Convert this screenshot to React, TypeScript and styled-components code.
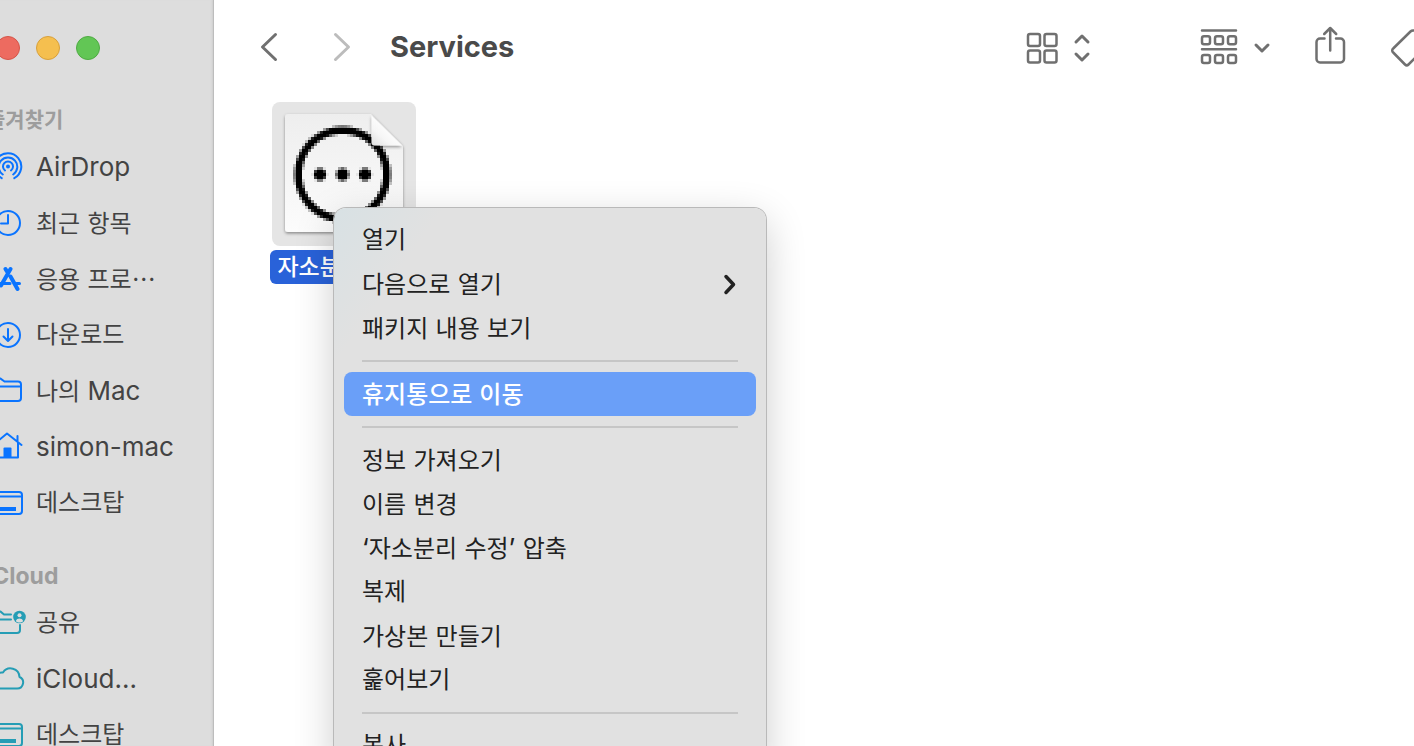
import React from 'react';
import styled, { createGlobalStyle } from 'styled-components';

const GlobalStyle = createGlobalStyle`
  * { box-sizing: border-box; }
  body { margin: 0; font-family: Inter, "Noto Sans CJK KR", sans-serif; background: #fff; }
  button { font: inherit; color: inherit; background: none; border: 0; padding: 0; text-align: left; }
  svg { display: block; flex: none; }
`;

const Window = styled.div`
  position: relative;
  display: flex;
  height: 100vh;
  overflow: hidden;
`;

const Sidebar = styled.aside`
  flex: none;
  width: 214px;
  height: 100%;
  overflow: hidden;
  background: #dddddd;
  border-right: 1px solid #bdbdbd;
  box-shadow: inset -2px 0 2px -1px #cfcfcf;
`;

const SidebarContent = styled.div`
  margin-left: -14px;
`;

const TrafficLights = styled.div`
  display: flex;
  gap: 16px;
  padding: 36px 10px 0;
  height: 99px;
`;

const Light = styled.button<{ $fill: string; $edge: string }>`
  width: 24px;
  height: 24px;
  border-radius: 50%;
  background: ${(p) => p.$fill};
  border: 1px solid ${(p) => p.$edge};
`;

const Section = styled.section`
  margin-bottom: 24px;
`;

const SectionTitle = styled.h2`
  margin: 0;
  height: 40px;
  padding-top: 2px;
  line-height: 38px;
  font-size: 21px;
  font-weight: 700;
  color: #9d9d9d;
`;

const SidebarItem = styled.a`
  display: flex;
  align-items: center;
  gap: 6px;
  height: 56px;
  font-size: 24px;
  line-height: 54px;
  color: #434343;
  text-decoration: none;
  white-space: nowrap;
`;

/* Latin runs are set slightly larger so that they balance the Hangul beside them. */
const Latin = styled.span<{ $size: number }>`
  font-size: ${(p) => p.$size}px;
`;

const Mixed = ({ text, latin = 26 }: { text: string; latin?: number }) => (
  <span>
    {text.split(/([ -~‘’]+)/).map((run, i) =>
      i % 2 ? <Latin key={i} $size={latin}>{run}</Latin> : run
    )}
  </span>
);

const Main = styled.main`
  flex: 1;
  min-width: 0;
  overflow: hidden;
`;

const Toolbar = styled.header`
  display: flex;
  align-items: center;
  height: 96px;
  padding-left: 42px;
  color: #707070;
`;

const Title = styled.h1`
  margin: 0 auto 0 36px;
  font-size: 29px;
  line-height: 36px;
  padding-bottom: 2px;
  font-weight: 700;
  color: #4a4a4a;
`;

const ToolButton = styled.button<{ $before?: number; $dim?: boolean }>`
  display: flex;
  align-items: center;
  gap: 14px;
  flex: none;
  margin-left: ${(p) => p.$before ?? 0}px;
  color: ${(p) => (p.$dim ? '#bcbcbc' : 'inherit')};
`;

const Files = styled.div`
  display: flex;
  padding: 6px 56px;
`;

const FileItem = styled.div`
  display: flex;
  flex-direction: column;
  align-items: center;
  gap: 4px;
  width: 148px;
`;

const Thumb = styled.div`
  width: 144px;
  height: 144px;
  border-radius: 8px;
  background: #e5e5e5;
`;

const FileName = styled.span`
  height: 34px;
  padding: 0 7px;
  border-radius: 6px;
  background: #2962d9;
  color: #fff;
  font-size: 23px;
  font-weight: 500;
  line-height: 34px;
  white-space: nowrap;
`;

const Menu = styled.div`
  position: absolute;
  left: 334px;
  top: 208px;
  width: 432px;
  padding: 10px;
  border-radius: 12px;
  background: linear-gradient(125deg, #d8e1e4 0, #e1e1e1 90px);
  box-shadow: 0 0 0 1px #b9b9b9, 0 12px 40px rgba(0, 0, 0, 0.2);
`;

const MenuItem = styled.button<{ $active?: boolean }>`
  display: flex;
  align-items: center;
  justify-content: space-between;
  width: 100%;
  height: 44px;
  padding: 0 18px;
  border-radius: 8px;
  font-size: 24px;
  line-height: 44px;
  font-weight: ${(p) => (p.$active ? 500 : 400)};
  color: ${(p) => (p.$active ? '#fff' : '#222')};
  background: ${(p) => (p.$active ? '#6a9ff8' : 'none')};
`;

const Separator = styled.hr`
  height: 2px;
  margin: 10px 18px;
  border: 0;
  background: #c6c6c6;
`;

const blue = '#0a74ff';
const teal = '#259db5';

const Icon = ({ children, color = blue }: { children: React.ReactNode; color?: string }) => (
  <svg width="44" height="44" viewBox="0 0 44 44" fill="none" stroke={color} strokeWidth="2" strokeLinecap="round" strokeLinejoin="round" aria-hidden="true">
    {children}
  </svg>
);

const AirDrop = () => (
  <Icon>
    <circle cx="22" cy="21.5" r="2" fill={blue} stroke="none" />
    <path d="M19 25.500a5 5 0 1 1 6 0M16.800 29.500a9.300 9.300 0 1 1 10.400 0M15.700 33.200a13.300 13.300 0 1 1 12.600 0" />
  </Icon>
);
const Clock = () => (
  <Icon><circle cx="22" cy="22" r="12" /><path d="M22 14v8.500h-7" /></Icon>
);
const Apps = () => (
  <Icon>
    <path d="M24.500 12L15 28.500M19.500 12L21 14.500M24.500 19.500L31.500 32" strokeWidth="4" />
    <path d="M10 26.500h14M30.500 26.500h3" strokeWidth="3" />
  </Icon>
);
const Download = () => (
  <Icon><circle cx="22" cy="22" r="12" /><path d="M22 16v11.500M17.500 23.500l4.500 4.500 4.500-4.500" /></Icon>
);
const Folder = () => (
  <Icon><path d="M8 12a2.500 2.500 0 0 1 2.500-2.500h4l4 3h13.500a3 3 0 0 1 3 3V29a3 3 0 0 1-3 3H11a3 3 0 0 1-3-3zM8 17.500h27" /></Icon>
);
const House = () => (
  <Icon>
    <path d="M7 20L21 8.500l14.500 11.500M11 18v14.500h21V18M31.500 16v-5" />
    <path d="M17.500 23.500a1 1 0 0 1 1-1h6a1 1 0 0 1 1 1V33h-8z" fill={blue} stroke="none" />
  </Icon>
);
const Desktop = ({ color = blue }: { color?: string }) => (
  <Icon color={color}><rect x="8" y="11" width="28" height="22" rx="3" /><path d="M8 15.500h28" /><path d="M13 28h17" strokeWidth="4" strokeLinecap="butt" /></Icon>
);
const Shared = () => (
  <Icon color={teal}>
    <path d="M25 13.500h-7l-3.500-3h-4A2.500 2.500 0 0 0 8 13v16a3 3 0 0 0 3 3h20a3 3 0 0 0 3-3v-5M8 18.500h17" />
    <circle cx="33.5" cy="16" r="6.3" fill={teal} stroke="none" />
    <circle cx="33.5" cy="14.3" r="2" fill="#ddd" stroke="none" />
    <path d="M29.800 20.300c.6-2.200 2-2.800 3.700-2.800s3.100.6 3.700 2.800c-2 1.700-5.400 1.700-7.400 0z" fill="#ddd" stroke="none" />
  </Icon>
);
const Cloud = () => (
  <Icon color={teal}><path d="M13 31.500h18a6 6 0 0 0 2.500-11.500 9 9 0 0 0-16.500-4.500 6 6 0 0 0-7 5A5.700 5.700 0 0 0 13 31.500z" /></Icon>
);

const favorites: [string, React.ReactNode][] = [
  ['AirDrop', <AirDrop />],
  ['최근 항목', <Clock />],
  ['응용 프로⋯', <Apps />],
  ['다운로드', <Download />],
  ['나의 Mac', <Folder />],
  ['simon-mac', <House />],
  ['데스크탑', <Desktop />],
];
const cloud: [string, React.ReactNode][] = [
  ['공유', <Shared />],
  ['iCloud...', <Cloud />],
  ['데스크탑', <Desktop color={teal} />],
];

const Glyph = ({ w, h, sw = 3, children }: { w: number; h: number; sw?: number; children: React.ReactNode }) => (
  <svg width={w} height={h} viewBox={`0 0 ${w} ${h}`} fill="none" stroke="currentColor" strokeWidth={sw} strokeLinecap="round" strokeLinejoin="round" aria-hidden="true">
    {children}
  </svg>
);

/* The low-resolution ring and dots of the workflow icon, as square cells. */
const CELL = 3;
const ringCells = (() => {
  const cells: { x: number; y: number; o: number }[] = [];
  const cover = (d: number, r: number) => Math.max(0, Math.min(1, (r - d) / CELL + 0.5));
  for (let i = -17; i <= 17; i++) {
    for (let j = -17; j <= 17; j++) {
      const x = i * CELL;
      const y = j * CELL;
      const d = Math.hypot(x, y);
      let o = cover(d, 48) - cover(d, 40.5);
      for (const cx of [-22.5, 0, 22.5]) o = Math.max(o, cover(Math.hypot(x - cx, y), 6.2));
      if (o > 0.04) cells.push({ x: 70.5 + x - 1.5, y: 72.5 + y - 1.5, o });
    }
  }
  return cells;
})();

const ServiceDocument = () => (
  <svg width="144" height="144" viewBox="0 0 144 144" role="img" aria-label="workflow">
    <defs>
      <linearGradient id="paper" x1="0" y1="0" x2="0" y2="1">
        <stop offset="0" stopColor="#eeeeee" />
        <stop offset="1" stopColor="#fcfcfc" />
      </linearGradient>
      <linearGradient id="fold" x1="0" y1="1" x2=".6" y2=".35">
        <stop offset="0" stopColor="#dedede" />
        <stop offset=".5" stopColor="#f6f6f6" />
        <stop offset="1" stopColor="#ffffff" />
      </linearGradient>
      <filter id="drop" x="-10%" y="-10%" width="120%" height="125%">
        <feDropShadow dx="0" dy="1.5" stdDeviation="1.5" floodOpacity=".4" />
      </filter>
    </defs>
    <path d="M16 12H99L131 44V127a3 3 0 0 1-3 3H16a3 3 0 0 1-3-3V15a3 3 0 0 1 3-3z" fill="url(#paper)" filter="url(#drop)" />
    <g shapeRendering="crispEdges">
      {ringCells.map((c, i) => (
        <rect key={i} x={c.x} y={c.y} width={CELL} height={CELL} fillOpacity={c.o} />
      ))}
    </g>
    <path d="M99.500 13.500L130 43.500H102.500a3 3 0 0 1-3-3z" fill="url(#fold)" filter="url(#drop)" />
  </svg>
);

const menuGroups: { label: string; active?: boolean; submenu?: boolean }[][] = [
  [{ label: '열기' }, { label: '다음으로 열기', submenu: true }, { label: '패키지 내용 보기' }],
  [{ label: '휴지통으로 이동', active: true }],
  [
    { label: '정보 가져오기' },
    { label: '이름 변경' },
    { label: '‘자소분리 수정’ 압축' },
    { label: '복제' },
    { label: '가상본 만들기' },
    { label: '훑어보기' },
  ],
  [{ label: '복사' }],
];

const SidebarSection = ({ title, items }: { title: string; items: [string, React.ReactNode][] }) => (
  <Section>
    <SectionTitle><Mixed text={title} latin={23} /></SectionTitle>
    {items.map(([label, icon]) => (
      <SidebarItem key={label} href="#">
        {icon}
        <Mixed text={label} />
      </SidebarItem>
    ))}
  </Section>
);

export default function App() {
  return (
    <>
      <GlobalStyle />
      <Window>
        <Sidebar>
          <SidebarContent>
            <TrafficLights>
              <Light $fill="#ed6b60" $edge="#d55549" aria-label="닫기" />
              <Light $fill="#f5bf4f" $edge="#d8a03c" aria-label="최소화" />
              <Light $fill="#62c655" $edge="#4fab43" aria-label="확대" />
            </TrafficLights>
            <SidebarSection title="즐겨찾기" items={favorites} />
            <SidebarSection title="iCloud" items={cloud} />
          </SidebarContent>
        </Sidebar>
        <Main>
          <Toolbar>
            <ToolButton aria-label="뒤로">
              <Glyph w={24} h={32}><path d="M19.500 2.500L6.500 15L19.500 27.500" /></Glyph>
            </ToolButton>
            <ToolButton $before={50} $dim aria-label="앞으로">
              <Glyph w={24} h={32}><path d="M5.500 2.500L18.500 15L5.500 27.500" /></Glyph>
            </ToolButton>
            <Title>Services</Title>
            <ToolButton aria-label="보기">
              <Glyph w={32} h={32} sw={2.5}>
                <rect x="2" y="2" width="12" height="12" rx="2" />
                <rect x="18.5" y="2" width="12" height="12" rx="2" />
                <rect x="2" y="18.5" width="12" height="12" rx="2" />
                <rect x="18.5" y="18.5" width="12" height="12" rx="2" />
              </Glyph>
              <Glyph w={20} h={32}><path d="M4 10l6-6 6 6M4 22l6 6 6-6" /></Glyph>
            </ToolButton>
            <ToolButton $before={108} aria-label="그룹">
              <Glyph w={38} h={38} sw={2.5}>
                <path d="M2 1.500h34M2 20.300h34" />
                {[7.2, 26].map((y) => [2, 15, 28].map((x) => (
                  <rect key={`${x}-${y}`} x={x} y={y} width="8" height="8" rx="2" />
                )))}
              </Glyph>
              <Glyph w={20} h={32}><path d="M4 13l6 6 6-6" /></Glyph>
            </ToolButton>
            <ToolButton $before={42} aria-label="공유">
              <Glyph w={32} h={44} sw={2.5}>
                <path d="M10.500 12.500H6a3.500 3.500 0 0 0-3.500 3.500v17a3.500 3.500 0 0 0 3.500 3.500h20.500a3.500 3.500 0 0 0 3.500-3.500v-17a3.500 3.500 0 0 0-3.500-3.500H22M16.200 24.500V2.500M10.200 8L16.200 2L22.200 8" />
              </Glyph>
            </ToolButton>
            <ToolButton $before={44} aria-label="태그">
              <Glyph w={24} h={40} sw={2.5}>
                <path d="M26 2.500h-3a4 4 0 0 0-2.500 1L3.200 20.500a2.500 2.500 0 0 0 0 4L15 36.500a2.500 2.500 0 0 0 3.500 0L26 29" />
              </Glyph>
            </ToolButton>
          </Toolbar>
          <Files>
            <FileItem>
              <Thumb><ServiceDocument /></Thumb>
              <FileName>자소분리 수정</FileName>
            </FileItem>
          </Files>
        </Main>
        <Menu role="menu">
          {menuGroups.map((group, i) => (
            <React.Fragment key={i}>
              {i > 0 && <Separator />}
              {group.map((item) => (
                <MenuItem key={item.label} role="menuitem" $active={item.active}>
                  <Mixed text={item.label} />
                  {item.submenu && (
                    <Glyph w={16} h={24} sw={3.5}><path d="M4 4.500l7.500 8-7.500 8" /></Glyph>
                  )}
                </MenuItem>
              ))}
            </React.Fragment>
          ))}
        </Menu>
      </Window>
    </>
  );
}
